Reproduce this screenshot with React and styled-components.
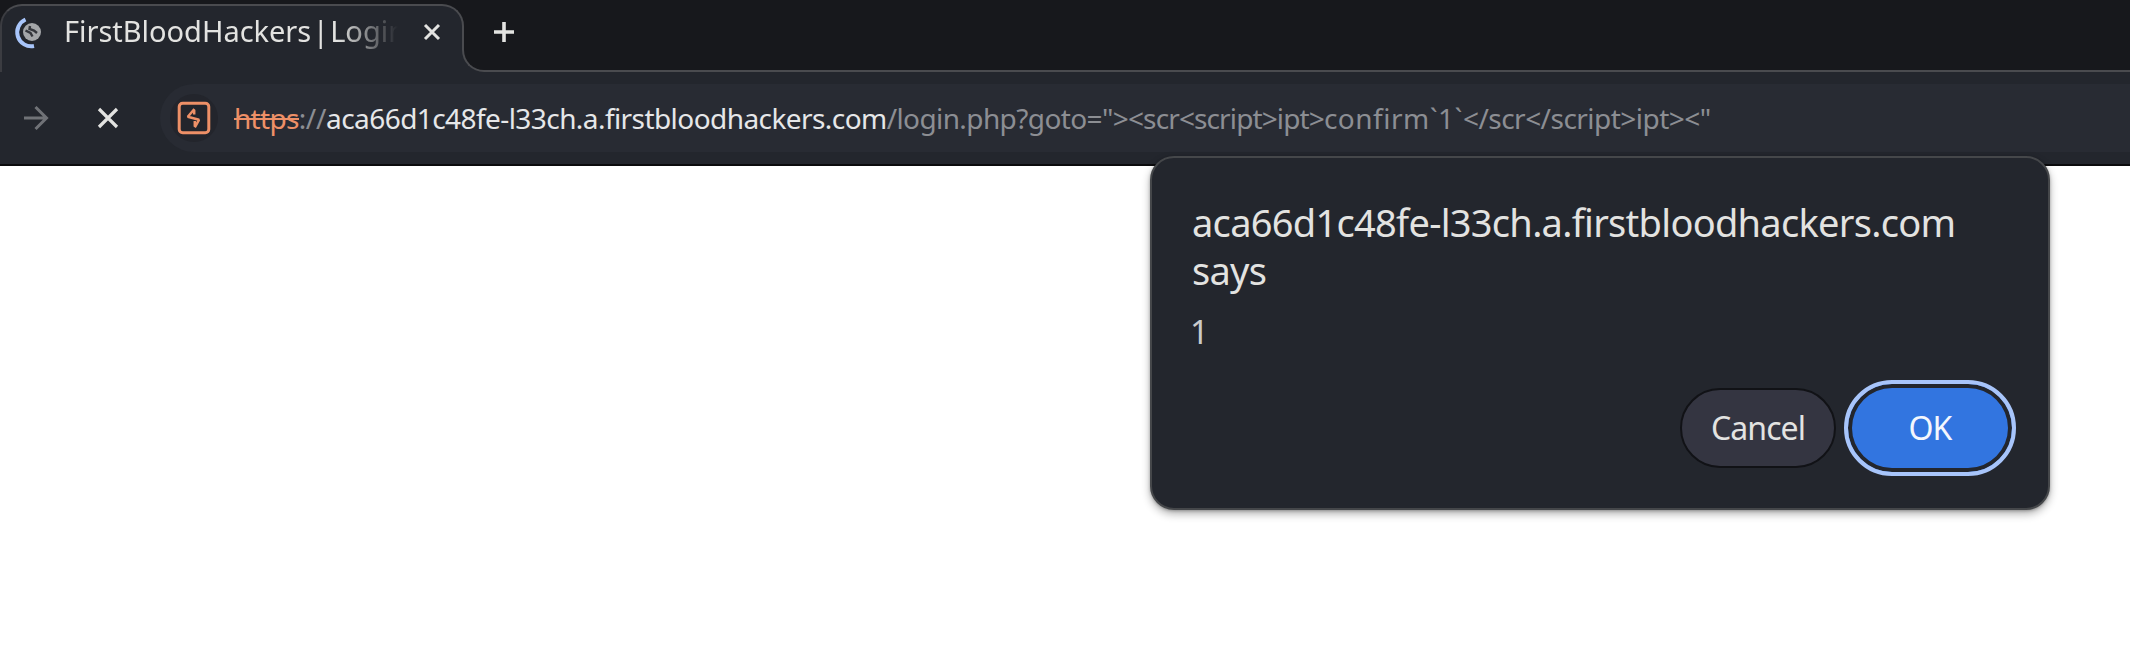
import React from "react";
import styled, { createGlobalStyle } from "styled-components";

const Global = createGlobalStyle`
  *, *::before, *::after { box-sizing: border-box; }
  html, body { margin: 0; background: #fff; }
  body { font-family: "Noto Sans", sans-serif; overflow: hidden; }
`;

const c = {
  strip: "#17181c",
  chrome: "#23262d",
  line: "#4a4b4f",
  text: "#e3e3e1",
  muted: "#8c8e93",
  orange: "#ee9067",
};

const Window = styled.div`
  position: relative;
  width: 2130px;
  height: 668px;
  overflow: hidden;
  background: #fff;
`;

const TabStrip = styled.div`
  display: flex;
  height: 72px;
  padding-top: 4px;
  background: ${c.strip};
  border-bottom: 2px solid ${c.line};
`;

const Tab = styled.div`
  display: flex;
  align-items: flex-start;
  width: 464px;
  height: 68px;
  padding-left: 12px;
  background: ${c.chrome};
  border: 2px solid ${c.line};
  border-bottom: 0;
  border-left-color: #3b3c41;
  border-radius: 22px 22px 0 0;
`;

const TabFlare = styled.div`
  flex: none;
  width: 24px;
  height: 24px;
  margin: 44px 0 0 -2px;
  background: ${c.chrome};
  &::before {
    content: "";
    display: block;
    height: 24px;
    background: ${c.strip};
    border: solid ${c.line};
    border-width: 0 0 2px 2px;
    border-bottom-left-radius: 22px;
  }
`;

const Favicon = styled.svg`
  flex: none;
  width: 32px;
  height: 36px;
  margin-top: 8px;
`;

const TabTitle = styled.div`
  flex: none;
  width: 334px;
  margin-left: 18px;
  overflow: hidden;
  white-space: nowrap;
  font-size: 29px;
  line-height: 40px;
  margin-top: 5px;
  color: ${c.text};
  letter-spacing: -0.02px;
  word-spacing: -6px;
  mask-image: linear-gradient(90deg, #000 82%, transparent 100%);
`;

const TabClose = styled.svg`
  flex: none;
  width: 18px;
  height: 18px;
  margin: 17px 0 0 25px;
`;

const NewTab = styled.svg`
  width: 22px;
  height: 22px;
  margin: 17px 0 0 7px;
`;

const Toolbar = styled.div`
  display: flex;
  align-items: flex-start;
  height: 94px;
  padding: 12px 0 0 23px;
  background: ${c.chrome};
  border-bottom: 2px solid #0b0b0d;
`;

const ToolIcon = styled.svg`
  flex: none;
  width: 26px;
  height: 26px;
  margin: 21px ${(p) => p.$gap} 0 0;
`;

const Omnibox = styled.div`
  display: flex;
  align-items: center;
  flex: 1;
  height: 68px;
  padding-left: 10px;
  background: #282b33;
  border-radius: 34px 0 0 34px;
`;

const SiteChip = styled.div`
  display: flex;
  align-items: center;
  justify-content: center;
  width: 48px;
  height: 48px;
  margin-right: 16px;
  border-radius: 50%;
  background: #23252c;
`;

const Url = styled.div`
  display: flex;
  white-space: pre;
  font-size: 28px;
  line-height: 40px;
  color: ${c.muted};
`;

const Part = styled.span`
  letter-spacing: ${(p) => p.$track || "0"};
  color: ${(p) => p.$color || "inherit"};
`;

const Scheme = styled(Part)`
  position: relative;
  &::after {
    content: "";
    position: absolute;
    left: 0;
    right: 0;
    top: 20px;
    height: 2px;
    background: ${c.orange};
  }
`;

const Dialog = styled.div`
  position: absolute;
  left: 1150px;
  top: 156px;
  display: flex;
  flex-direction: column;
  width: 900px;
  height: 354px;
  padding: 40px 32px 32px 40px;
  background: ${c.chrome};
  border: 2px solid #45474a;
  border-radius: 24px;
  box-shadow: 0 4px 8px rgba(0, 0, 0, 0.3), 0 1px 3px rgba(0, 0, 0, 0.25);
`;

const DialogTitle = styled.div`
  font-size: 38px;
  line-height: 48px;
  color: ${c.text};
  white-space: pre;
  letter-spacing: -0.71px;
`;

const DialogMessage = styled.div`
  margin-top: 16px;
  margin-left: -2px;
  font-size: 33px;
  line-height: 44px;
  color: #c9cacb;
`;

const Actions = styled.div`
  display: flex;
  justify-content: flex-end;
  align-items: center;
  margin: auto 0 0;
`;

const Button = styled.button`
  display: flex;
  align-items: center;
  justify-content: center;
  padding: 0;
  font: 32px/44px "Noto Sans", sans-serif;
  letter-spacing: -0.9px;
  width: ${(p) => (p.$primary ? 172 : 156)}px;
  height: ${(p) => (p.$primary ? 96 : 80)}px;
  margin-left: ${(p) => (p.$primary ? 8 : 0)}px;
  color: ${(p) => (p.$primary ? "#f4f7fd" : c.text)};
  background: ${(p) => (p.$primary ? "#3275e0" : "#343541")};
  border: ${(p) => (p.$primary ? "4px solid #a8c5fa" : "2px solid #111216")};
  border-radius: 48px;
  box-shadow: ${(p) => (p.$primary ? `inset 0 0 0 4px ${c.chrome}` : "none")};
`;

export default function App() {
  return (
    <Window>
      <Global />
      <TabStrip>
        <Tab>
          <Favicon viewBox="0 0 32 36" fill="none">
            <path d="M11.5 5.5A14 14 0 0 0 20 32" stroke="#a8c5fa" strokeWidth="4" />
            <circle cx="18" cy="18" r="9" fill="#a4a6a9" />
            <path
              d="M11.5 16.5l5 2.5 2 3.5M16 12l-.5 3 4.5 1.5 3 2.5"
              stroke="#34363c"
              strokeWidth="2.4"
            />
          </Favicon>
          <TabTitle>FirstBloodHackers | Login</TabTitle>
          <TabClose viewBox="0 0 18 18">
            <path d="M2 2l14 14M16 2L2 16" stroke="#e3e3e1" strokeWidth="3" />
          </TabClose>
        </Tab>
        <TabFlare />
        <NewTab viewBox="0 0 22 22">
          <path d="M11 1v20M1 11h20" stroke="#e3e3e1" strokeWidth="3.6" />
        </NewTab>
      </TabStrip>
      <Toolbar>
        <ToolIcon $gap="46px" viewBox="0 0 26 26" fill="none">
          <path d="M1 13h22M12.5 2l11 11-11 11" stroke="#707277" strokeWidth="3" />
        </ToolIcon>
        <ToolIcon $gap="39px" viewBox="0 0 26 26">
          <path d="M4 4l18 18M22 4L4 22" stroke="#e3e3e1" strokeWidth="3.2" />
        </ToolIcon>
        <Omnibox>
          <SiteChip>
            <svg width="34" height="34" viewBox="0 0 34 34" fill="none">
              <rect x="2.2" y="2.2" width="29.6" height="29.6" rx="3.5" stroke={c.orange} strokeWidth="3" />
              <path
                d="M17.4 8L10.8 15.8L22 18.8L17.8 26.4M17.2 9v4.5M17.8 20v5.5"
                stroke={c.orange}
                strokeWidth="2.5"
                strokeLinejoin="bevel"
              />
            </svg>
          </SiteChip>
          <Url>
            <Scheme $color={c.orange} $track="-0.7px">https</Scheme>
            <Part $track="-0.3px">://</Part>
            <Part $color="#e6e7e9" $track="-0.57px">aca66d1c48fe-l33ch.a.firstbloodhackers.com</Part>
            <Part $track="-0.6px">{'/login.php?goto="'}</Part>
            <Part $track="-0.88px">{"><scr<script>ipt>"}</Part>
            <Part $track="0.5px">confirm`1`</Part>
            <Part $track="-0.53px">{'</scr</script>ipt><"'}</Part>
          </Url>
        </Omnibox>
      </Toolbar>
      <Dialog>
        <DialogTitle>{"aca66d1c48fe-l33ch.a.firstbloodhackers.com\nsays"}</DialogTitle>
        <DialogMessage>1</DialogMessage>
        <Actions>
          <Button>Cancel</Button>
          <Button $primary>OK</Button>
        </Actions>
      </Dialog>
    </Window>
  );
}
